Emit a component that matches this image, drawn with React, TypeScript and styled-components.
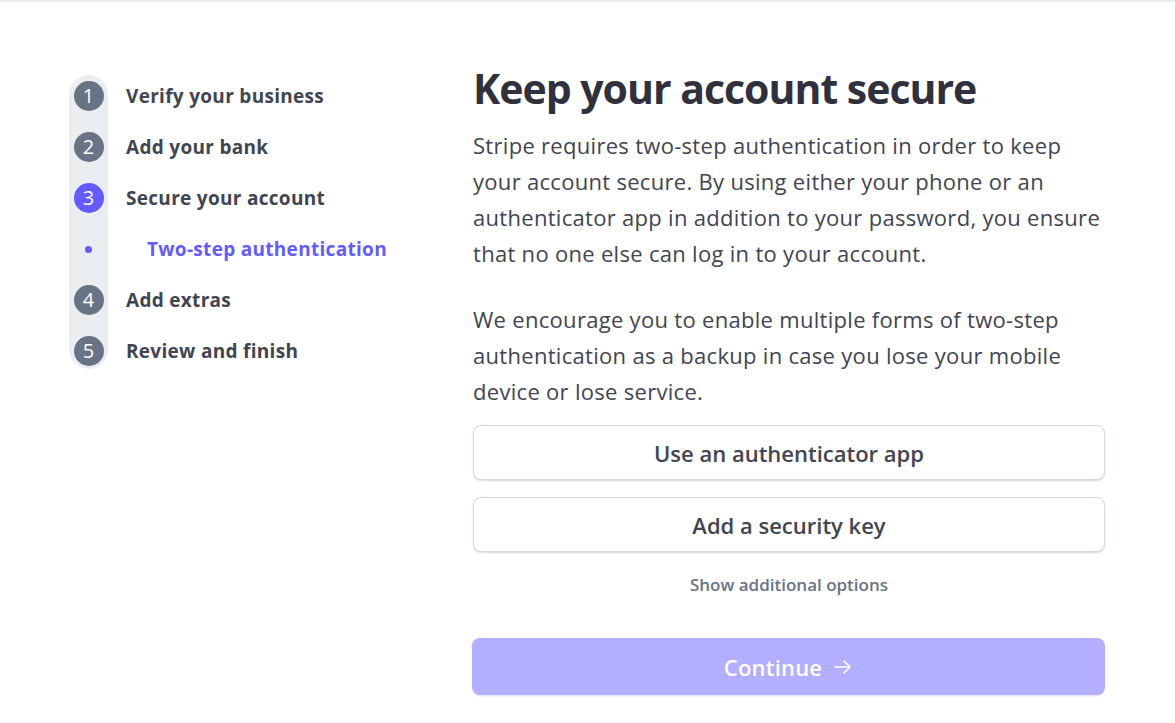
import React from "react";
import styled, { createGlobalStyle } from "styled-components";

const Global = createGlobalStyle`
  html, body { margin: 0; padding: 0; background: #ffffff; }
  body { font-family: "Open Sans", "Noto Sans", sans-serif; -webkit-font-smoothing: antialiased; }
  * { box-sizing: border-box; }
`;

const Page = styled.div`
  min-height: 723px;
  border-top: 2px solid #ebeef1;
  display: flex;
  align-items: flex-start;
  padding-left: 69px;
`;

const Nav = styled.ol`
  list-style: none;
  margin: 0;
  padding: 0;
  width: 404px;
  margin-top: 68.5px;
  position: relative;
  &::before {
    content: "";
    position: absolute;
    left: 0;
    top: 4.5px;
    bottom: 7.5px;
    width: 39px;
    border-radius: 20px;
    background: #ebeef1;
  }
`;

const Row = styled.li`
  position: relative;
  height: 51px;
  display: flex;
  align-items: center;
  gap: 18px;
`;

const Marker = styled.span`
  width: 39px;
  display: flex;
  justify-content: center;
  align-items: center;
`;

const Circle = styled.span<{ $active?: boolean }>`
  width: 30px;
  height: 30px;
  border-radius: 50%;
  background: ${(p) => (p.$active ? "#635bff" : "#687385")};
  color: #ffffff;
  font-size: 20px;
  display: flex;
  align-items: center;
  justify-content: center;
  line-height: 1;
`;

const Dot = styled.span`
  width: 7px;
  height: 7px;
  border-radius: 50%;
  background: #635bff;
`;

const Label = styled.span<{ $sub?: boolean }>`
  font-size: 19px;
  font-weight: 700;
  letter-spacing: 0.3px;
  color: ${(p) => (p.$sub ? "#635bff" : "#414552")};
  padding-left: ${(p) => (p.$sub ? "21px" : "0")};
`;

const Main = styled.main`
  width: 632px;
  margin-top: 62px;
  display: flex;
  flex-direction: column;
`;

const Title = styled.h1`
  margin: 0 0 15px;
  font-size: 41px;
  line-height: 48px;
  font-weight: 700;
  letter-spacing: -1px;
  color: #30313d;
`;

const Para = styled.p`
  margin: 0 0 30px;
  font-size: 22px;
  line-height: 36px;
  letter-spacing: 0.3px;
  color: #414552;
  &:last-of-type { margin-bottom: 16px; }
`;

const OptionButton = styled.button`
  width: 632px;
  height: 55px;
  margin-bottom: 17px;
  background: #ffffff;
  border: 1px solid #d5dbe1;
  border-radius: 8px;
  box-shadow: 0 1px 2px rgba(0, 0, 0, 0.15);
  font-family: inherit;
  font-size: 22px;
  font-weight: 600;
  color: #414552;
  cursor: pointer;
`;

const LinkButton = styled.button`
  align-self: center;
  background: none;
  border: none;
  padding: 0;
  margin: 4px 0 0;
  font-family: inherit;
  font-size: 17px;
  line-height: 24px;
  font-weight: 600;
  color: #687385;
  cursor: pointer;
`;

const Continue = styled.button`
  margin-top: 41px;
  width: 633px;
  margin-left: -1px;
  height: 57px;
  background: #b3aeff;
  border: none;
  border-radius: 8px;
  box-shadow: 0 1px 2px rgba(99, 91, 255, 0.2);
  color: #ffffff;
  font-family: inherit;
  font-size: 22px;
  font-weight: 600;
  letter-spacing: 0.2px;
  display: flex;
  align-items: center;
  justify-content: center;
  gap: 11px;
`;

const steps: { n?: number; label: string; active?: boolean; sub?: boolean }[] = [
  { n: 1, label: "Verify your business" },
  { n: 2, label: "Add your bank" },
  { n: 3, label: "Secure your account", active: true },
  { label: "Two-step authentication", sub: true },
  { n: 4, label: "Add extras" },
  { n: 5, label: "Review and finish" },
];

export default function App() {
  return (
    <>
      <Global />
      <Page>
        <Nav>
          {steps.map((s) => (
            <Row key={s.label}>
              <Marker>{s.sub ? <Dot /> : <Circle $active={s.active}>{s.n}</Circle>}</Marker>
              <Label $sub={s.sub}>{s.label}</Label>
            </Row>
          ))}
        </Nav>
        <Main>
          <Title>Keep your account secure</Title>
          <Para>
            Stripe requires two-step authentication in order to keep your account secure. By using
            either your phone or an authenticator app in addition to your password, you ensure that
            no one else can log in to your account.
          </Para>
          <Para>
            We encourage you to enable multiple forms of two-step authentication as a backup in case
            you lose your mobile device or lose service.
          </Para>
          <OptionButton>Use an authenticator app</OptionButton>
          <OptionButton>Add a security key</OptionButton>
          <LinkButton>Show additional options</LinkButton>
          <Continue>
            Continue
            <svg width="20" height="20" viewBox="0 0 20 20" fill="none" stroke="#ffffff" strokeWidth="1.6" strokeLinecap="round" strokeLinejoin="round">
              <path d="M2 10h15M11 4l6 6-6 6" />
            </svg>
          </Continue>
        </Main>
      </Page>
    </>
  );
}
